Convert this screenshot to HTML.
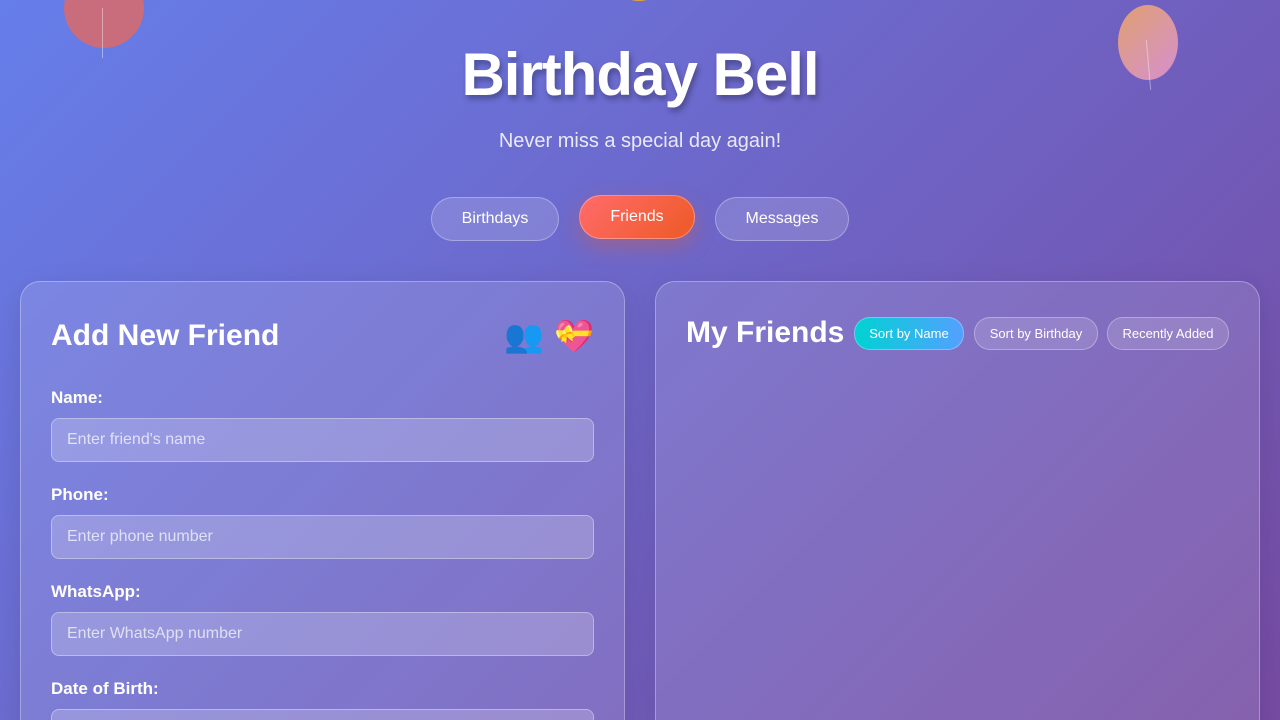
<!DOCTYPE html>
<html style="width:1280px;height:720px;overflow:hidden"><head><style>
*{box-sizing:border-box;margin:0;padding:0}
body{width:1280px;height:720px;overflow:hidden;font-family:"Liberation Sans",sans-serif;background:linear-gradient(135deg,#667eea 0%,#764ba2 100%);position:relative;color:#fff}
.bal{position:absolute;border-radius:50%}
h1{position:absolute;top:40px;width:100%;text-align:center;font-size:60px;font-weight:bold;letter-spacing:-1px;text-shadow:2px 4px 6px rgba(0,0,0,.3)}
.sub{position:absolute;top:130px;width:100%;text-align:center;font-size:20px;color:rgba(255,255,255,.85)}
.tab{position:absolute;height:44px;border-radius:22px;background:rgba(255,255,255,.15);border:1px solid rgba(255,255,255,.3);font-size:16px;display:flex;align-items:center;justify-content:center}
.card{position:absolute;top:281px;width:605px;height:460px;border-radius:20px;background:rgba(255,255,255,.12);border:1px solid rgba(255,255,255,.3);box-shadow:0 8px 30px rgba(0,0,0,.1)}
h2{font-size:30px;font-weight:bold;position:absolute}
label{position:absolute;left:30px;font-size:17px;font-weight:bold}
.in{position:absolute;left:30px;width:543px;height:44px;border-radius:8px;background:rgba(255,255,255,.2);border:1px solid rgba(255,255,255,.35);font-size:16px;color:rgba(255,255,255,.7);padding:12px 15px}
.sb{position:absolute;top:35px;height:33px;border-radius:16px;font-size:13px;display:flex;align-items:center;justify-content:center;background:rgba(255,255,255,.15);border:1px solid rgba(255,255,255,.3)}
.em{position:absolute;top:34px;font-size:32px;line-height:40px;font-family:'Noto Color Emoji',sans-serif}
</style></head><body>
<div class="bal" style="left:64px;top:-32px;width:80px;height:80px;background:#d46a70;opacity:.9"></div>
<div style="position:absolute;left:102px;top:8px;width:1px;height:50px;background:rgba(255,255,255,.4)"></div>
<div class="bal" style="left:1118px;top:5px;width:60px;height:75px;background:linear-gradient(135deg,#e0a070,#d590d0)"></div>
<div style="position:absolute;left:1148px;top:40px;width:1px;height:50px;background:rgba(255,255,255,.4);transform:rotate(-5deg)"></div>
<div class="bal" style="left:626px;top:-10px;width:26px;height:11px;background:#e0a040"></div>
<h1>Birthday Bell</h1>
<div class="sub">Never miss a special day again!</div>
<div class="tab" style="left:431px;top:197px;width:128px">Birthdays</div>
<div class="tab" style="left:579px;top:195px;width:116px;background:linear-gradient(135deg,#ff6b6b,#ee5a24);border-color:rgba(255,255,255,.3);box-shadow:0 8px 20px rgba(238,90,36,.35)">Friends</div>
<div class="tab" style="left:715px;top:197px;width:134px">Messages</div>
<div class="card" style="left:20px">
<h2 style="left:30px;top:37px">Add New Friend</h2>
<div class="em" style="left:483px">👥</div>
<div class="em" style="left:533px">💝</div>
<label style="top:106px">Name:</label><div class="in" style="top:136px">Enter friend's name</div>
<label style="top:203px">Phone:</label><div class="in" style="top:233px">Enter phone number</div>
<label style="top:300px">WhatsApp:</label><div class="in" style="top:330px">Enter WhatsApp number</div>
<label style="top:397px">Date of Birth:</label><div class="in" style="top:427px"></div>
</div>
<div class="card" style="left:655px">
<h2 style="left:30px;top:34px">My Friends</h2>
<div class="sb" style="left:198px;width:110px;background:linear-gradient(90deg,#00d2d3,#54a0ff)">Sort by Name</div>
<div class="sb" style="left:318px;width:124px">Sort by Birthday</div>
<div class="sb" style="left:451px;width:122px">Recently Added</div>
</div>
</body></html>
